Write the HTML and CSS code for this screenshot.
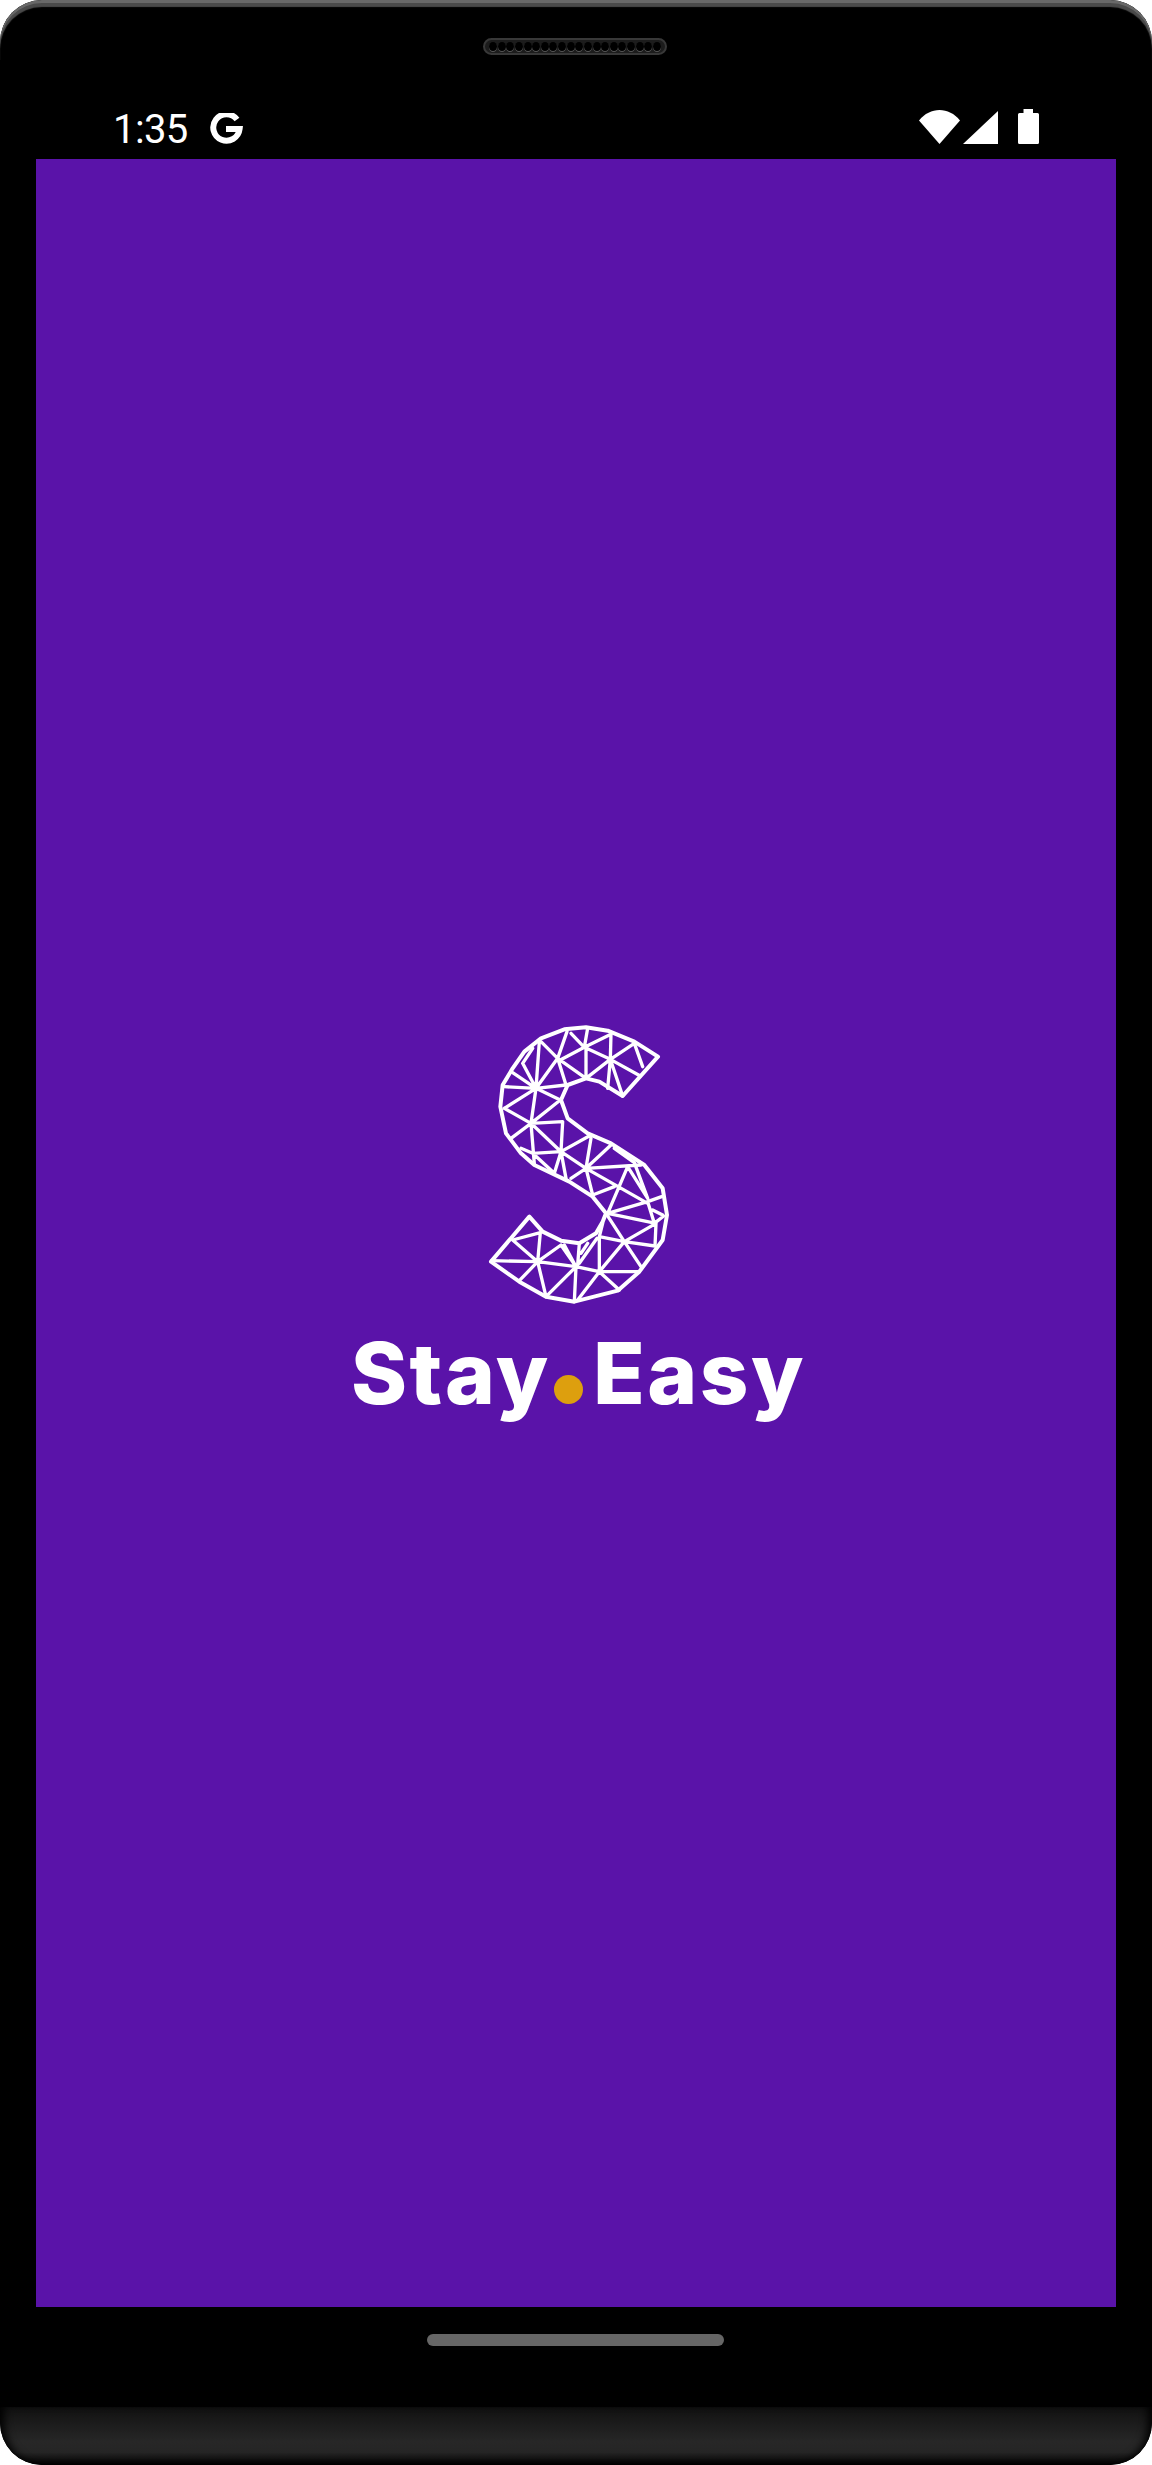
FILE: index.html
```html
<!DOCTYPE html>
<html lang="en">
<head>
<meta charset="utf-8">
<title>Stay.Easy</title>
<link rel="stylesheet" href="styles.css">
</head>
<body>
<div class="device">
  <header class="top-bezel">
    <div class="speaker">
      <i></i><i></i><i></i><i></i><i></i><i></i><i></i><i></i><i></i><i></i>
      <i></i><i></i><i></i><i></i><i></i><i></i><i></i><i></i><i></i><i></i>
    </div>
    <div class="status">
      <div class="status-left">
        <span class="time">1:35</span>
        <svg class="g-icon" viewBox="0 0 34 32" width="34" height="32"><path d="M28 6.500A13.200 13.200 0 1 0 30.600 16H17" fill="none" stroke="#fff" stroke-width="6"/></svg>
      </div>
      <div class="status-right">
        <svg class="wifi" viewBox="0 0 41 34" width="41" height="34"><path d="M0 10.500C11 -3.500 30 -3.500 41 10.500L20.500 34Z" fill="#fff"/></svg>
        <svg class="signal" viewBox="0 0 35 33" width="35" height="33"><path d="M35 0V33H0Z" fill="#fff"/></svg>
        <svg class="battery" viewBox="0 0 21 35" width="21" height="35"><path d="M5.500 0H15V4H19.500Q21 4 21 5.500V33.500Q21 35 19.500 35H1.500Q0 35 0 33.500V5.500Q0 4 1.500 4H5.500Z" fill="#fff"/></svg>
      </div>
    </div>
  </header>
  <main class="screen">
    <svg class="logo" viewBox="0 0 630 930" width="210" height="310">
      <path class="mesh outline" d="M561 140L490 95L410 62L345 52L280 58L210 85L160 125L125 175L95 225L88 290L105 370L150 430L190 465L295 515L365 560L405 610L395 635L375 670L325 700L270 692L215 665L175 620L60 755L145 815L225 860L310 875L440 842L505 785L575 690L588 615L575 535L520 465L420 400L350 370L290 325L270 270L290 225L345 205L385 215L455 258Z"/>
      <path class="mesh" d="M210 95L260 145L288 65M300 70L340 112L350 55M415 75L340 112L272 148M340 112L418 148L420 70M418 148L490 100L515 170M418 148L508 198M345 112V205M418 148L345 205M418 148L455 258M418 148L410 235M260 145L345 205M260 145L285 225M260 145L195 235L205 95M185 115L155 160L195 235L125 188M195 235L100 230M195 235L100 295M195 235L268 270L180 340L100 295M195 235L285 225M195 235L180 340L120 385M180 340L275 335L270 425L360 375M180 340L270 425L185 430L150 415M180 340L190 462M185 430L250 490L270 425L345 475L360 385M345 475L420 405M345 475L510 465M270 425L285 505M345 475L300 505M345 475L365 555L430 530M345 475L530 580M430 415L490 458L530 565M470 470L410 610L530 575L572 560M530 575L550 640L578 618M545 600L575 615M470 470L530 565M410 610L555 640L552 708L460 695L555 640M405 610L460 695L510 770M395 640L385 680L460 695L385 785L505 785M385 680L385 785M378 685L325 760M350 700L330 730M385 785L315 770L310 875M385 785L320 870M385 785L445 840M315 770L225 860L200 755L270 705L315 770L280 705M325 700L320 765M315 770L200 755L208 668L125 690L200 755L145 812M200 755L62 752"/>
    </svg>
    <div class="wordmark"><span>Stay</span><i class="dot"></i><span>Easy</span></div>
  </main>
  <div class="nav-bezel"><div class="pill"></div></div>
  <footer class="chin"></footer>
</div>
</body>
</html>
```

FILE: styles.css
```css
* { box-sizing: border-box; }
html, body { margin: 0; background: #fff; }
.device {
  position: relative;
  width: 1152px;
  height: 2465px;
  display: flex;
  flex-direction: column;
  background: #000;
  border-radius: 42px;
  overflow: hidden;
}
.device::before {
  content: "";
  position: absolute;
  inset: 0 0 auto 0;
  height: 60px;
  border-radius: 42px 42px 0 0;
  box-shadow: inset 0 3px 0 #686868, inset 0 7px 1px #4a4a4a;
  pointer-events: none;
}
.top-bezel {
  position: relative;
  height: 159px;
  padding: 109px 113px 0 113px;
  flex: none;
}
.speaker {
  position: absolute;
  left: 483px;
  top: 38px;
  width: 184px;
  height: 17px;
  padding: 0 4px;
  display: flex;
  align-items: center;
  justify-content: space-between;
  background: #1c1c1c;
  border: 2px solid #383838;
  border-radius: 9px;
}
.speaker i {
  width: 8px;
  height: 9px;
  background: #000;
  border-radius: 50%;
  box-shadow: 0 1px 0 #555;
}
.status {
  display: flex;
  justify-content: space-between;
  align-items: flex-start;
}
.status-left {
  display: flex;
  align-items: flex-start;
  gap: 21px;
}
.time {
  font: 400 40px/40px Roboto, sans-serif;
  color: #fff;
  margin-top: 1px;
  letter-spacing: -.6px;
}
.g-icon { margin-top: 4px; }
.status-right {
  display: flex;
  align-items: flex-start;
}
.wifi { margin-top: 1px; }
.signal { margin: 2px 0 0 3px; }
.battery { margin-left: 20px; }
.screen {
  flex: 1;
  margin: 0 36px;
  background: #5a13a9;
  display: flex;
  flex-direction: column;
  align-items: center;
  justify-content: center;
}
.logo { display: block; }
.mesh {
  fill: none;
  stroke: #fff;
  stroke-width: 10;
  stroke-linejoin: round;
  stroke-linecap: round;
}
.outline { stroke-width: 12; }
.wordmark {
  height: 136px;
  display: flex;
  align-items: baseline;
  font: 800 85px/108px Inter, sans-serif;
  color: #fff;
  letter-spacing: 2.500px;
  margin-left: 5px;
}
.dot {
  width: 29px;
  height: 29px;
  margin: 0 10px 0 3px;
  background: #dd9f0e;
  border-radius: 50%;
}
.nav-bezel {
  height: 100px;
  flex: none;
  padding: 27px 2px 0 0;
  display: flex;
  justify-content: center;
}
.pill {
  width: 297px;
  height: 12px;
  background: #666;
  border-radius: 6px;
}
.chin {
  height: 58px;
  flex: none;
  border-radius: 0 0 42px 42px;
  background: linear-gradient(#111 0, #1c1c1c 30%, #272727 60%, #252525 78%, #000 100%);
  box-shadow: inset 8px 0 8px -4px #000, inset -8px 0 8px -4px #000;
}
```
